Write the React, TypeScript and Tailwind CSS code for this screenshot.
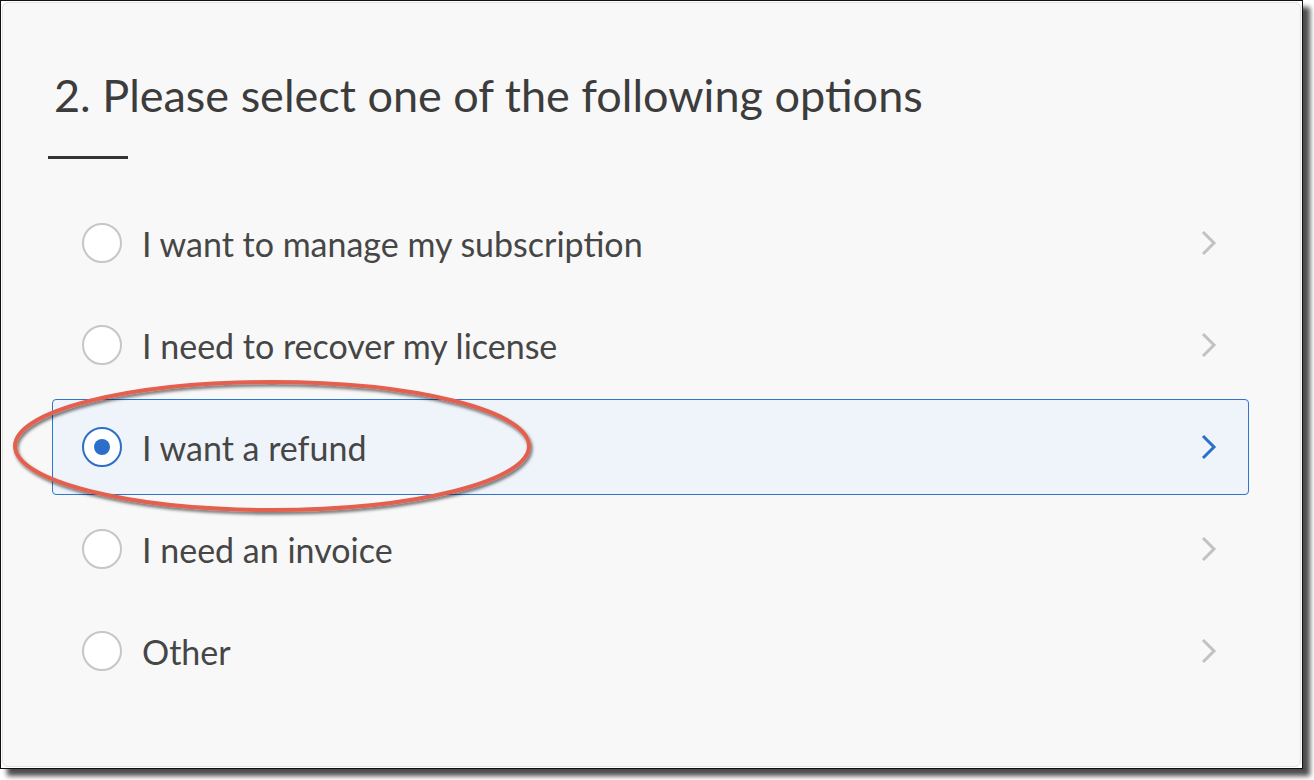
import React from 'react';

const options = [
  'I want to manage my subscription',
  'I need to recover my license',
  'I want a refund',
  'I need an invoice',
  'Other',
];

function Chevron({ active }: { active: boolean }) {
  return (
    <svg width="16" height="26" viewBox="0 0 16 26" className="shrink-0">
      <polyline
        points="2,2 13,13 2,24"
        fill="none"
        stroke={active ? '#2c6fc9' : '#c2c2c2'}
        strokeWidth="3"
      />
    </svg>
  );
}

export default function App() {
  const selected = 2;

  return (
    <div className="relative w-[1314px] h-[780px] bg-white overflow-hidden" style={{ fontFamily: 'Lato, "Noto Sans", sans-serif' }}>
      {/* framed screenshot */}
      <div className="w-[1303px] h-[769px] border border-[#111] bg-white p-[1px] shadow-[7px_7px_5px_rgba(0,0,0,0.7)]">
        <div className="h-full rounded-[6px] border border-[#e2e2e2] bg-[#f8f8f8] pl-[45px] pr-[51px]">
          <h2 className="pt-[65px] pl-[6px] text-[45px] leading-[55px] font-normal text-[#3c3c3c]">
            2. Please select one of the following options
          </h2>
          <div className="mt-[33px] h-[3px] w-[80px] bg-[#333]" />

          <div className="mt-[36px] flex flex-col gap-[6px] pl-[4px]">
            {options.map((label, i) => {
              const active = i === selected;
              return (
                <div
                  key={label}
                  className={
                    active
                      ? 'flex h-[96px] items-center rounded-[4px] border border-[#2c75d0] bg-[#eff4fa] pl-[29px] pr-[31px]'
                      : 'flex h-[96px] items-center rounded-[4px] border border-transparent pl-[29px] pr-[31px]'
                  }
                >
                  {active ? (
                    <span className="flex h-[40px] w-[40px] shrink-0 items-center justify-center rounded-full border-2 border-[#2c6fc9] bg-white">
                      <span className="h-[16px] w-[16px] rounded-full bg-[#2c6fc9]" />
                    </span>
                  ) : (
                    <span className="h-[40px] w-[40px] shrink-0 rounded-full border-2 border-[#c6c6c6] bg-white" />
                  )}
                  <span className="ml-[20px] flex-1 text-[34px] text-[#464646]">{label}</span>
                  <Chevron active={active} />
                </div>
              );
            })}
          </div>
        </div>
      </div>

      {/* red annotation ellipse */}
      <svg className="absolute left-0 top-[370px] pointer-events-none" width="560" height="160" viewBox="0 0 560 160">
        <defs>
          <filter id="sh" x="-10%" y="-20%" width="120%" height="140%">
            <feDropShadow dx="1.5" dy="2.5" stdDeviation="1.5" floodColor="#000" floodOpacity="0.55" />
          </filter>
        </defs>
        <ellipse cx="272" cy="76" rx="257" ry="64" fill="none" stroke="#e3604f" strokeWidth="4" filter="url(#sh)" />
      </svg>
    </div>
  );
}
